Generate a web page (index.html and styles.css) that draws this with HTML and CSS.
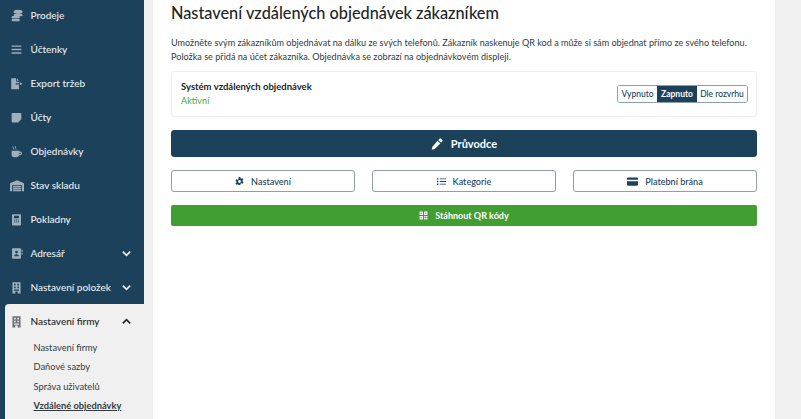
FILE: index.html
```html
<!DOCTYPE html>
<html lang="cs">
<head>
<meta charset="utf-8">
<title>Nastavení vzdálených objednávek zákazníkem</title>
<link rel="stylesheet" href="styles.css">
</head>
<body>
<div class="app">
  <nav class="sidebar">
    <a class="item"><svg class="ic" viewBox="0 0 16 16"><ellipse cx="10" cy="3.500" rx="5.500" ry="2.500"/><rect x="4.500" y="6" width="11" height="3" rx="1.500"/><rect x="2" y="8.500" width="10" height="3" rx="1.500"/><rect x="2" y="12" width="10" height="3" rx="1.500"/></svg><span>Prodeje</span></a>
    <a class="item"><svg class="ic" viewBox="0 0 16 16"><path d="M2 3h12v1.700H2zM2 7.200h12v1.700H2zM2 11.400h12v1.700H2z"/></svg><span>Účtenky</span></a>
    <a class="item"><svg class="ic" viewBox="0 0 16 16"><path d="M1.500 1.500h6v4.200H11v2H7v1.500h4v5.800H1.500zM8.500 1.500 11 4.700H8.500zM12 6.500 15.500 8.300 12 10z"/></svg><span>Export tržeb</span></a>
    <a class="item"><svg class="ic" viewBox="0 0 16 16"><path d="M3 2.500h10a1 1 0 0 1 1 1V10l-4 4H3a1 1 0 0 1-1-1V3.500a1 1 0 0 1 1-1z"/></svg><span>Účty</span></a>
    <a class="item"><svg class="ic" viewBox="0 0 16 16"><path d="M2 7h9.500v1h1a2.300 2.300 0 0 1 0 4.600h-1.300A3.300 3.300 0 0 1 8 15H5.300A3.300 3.300 0 0 1 2 11.700zM11.500 9.500v1.700h1a.85.85 0 0 0 0-1.700zM4 1.500l1 4H4l-1-4zM7 1.500l1 4H7l-1-4z"/></svg><span>Objednávky</span></a>
    <a class="item"><svg class="ic ic-wide" viewBox="0 0 16 14"><path d="M8 1 16 4.500V13.500h-2.500V6.500h-11v7H0V4.500zM3.500 7.300h9v1.600h-9zM3.500 9.600h9v1.600h-9zM3.500 11.900h9v1.600h-9z"/></svg><span class="label-wide">Stav skladu</span></a>
    <a class="item"><svg class="ic" viewBox="0 0 16 16"><path fill-rule="evenodd" d="M3.500 1.500h9a1 1 0 0 1 1 1v12a1 1 0 0 1-1 1h-9a1 1 0 0 1-1-1v-12a1 1 0 0 1 1-1zM5 3.500v3h6v-3zM5 8v1.300h1.400V8zM7.300 8v1.300h1.400V8zM9.600 8v1.300H11V8zM5 10.500v1.300h1.400v-1.300zM7.300 10.500v1.300h1.400v-1.300zM9.600 10.500v1.300H11v-1.300z"/></svg><span>Pokladny</span></a>
    <a class="item"><svg class="ic" viewBox="0 0 16 16"><path fill-rule="evenodd" d="M3.500 1.500h9a1 1 0 0 1 1 1v11a1 1 0 0 1-1 1h-9a1 1 0 0 1-1-1v-11a1 1 0 0 1 1-1zM8 4.500a1.700 1.700 0 1 0 0 3.400 1.700 1.700 0 0 0 0-3.400zM5 11.500h6c0-1.500-1.300-2.600-3-2.600s-3 1.100-3 2.600zM14.200 3.500H15.500V6h-1.300zM14.200 7H15.500v2.500h-1.300z"/></svg><span>Adresář</span><svg class="chev" viewBox="0 0 12 12"><path d="M2 4l4 4 4-4"/></svg></a>
    <a class="item"><svg class="ic" viewBox="0 0 16 16"><path fill-rule="evenodd" d="M3 1.500h10v14H9.500V13h-3v2.500H3zM5 3.500v2h2v-2zM9 3.500v2h2v-2zM5 7v2h2V7zM9 7v2h2V7zM5 10.500V12h6v-1.500z"/></svg><span>Nastavení položek</span><svg class="chev" viewBox="0 0 12 12"><path d="M2 4l4 4 4-4"/></svg></a>
    <div class="group">
      <a class="item item-open"><svg class="ic" viewBox="0 0 16 16"><path fill-rule="evenodd" d="M3 1.500h10v14H9.500V13h-3v2.500H3zM5 3.500v2h2v-2zM9 3.500v2h2v-2zM5 7v2h2V7zM9 7v2h2V7zM5 10.500V12h6v-1.500z"/></svg><span>Nastavení firmy</span><svg class="chev" viewBox="0 0 12 12"><path d="M2 8l4-4 4 4"/></svg></a>
      <a class="sub">Nastavení firmy</a>
      <a class="sub">Daňové sazby</a>
      <a class="sub">Správa uživatelů</a>
      <a class="sub sub-active">Vzdálené objednávky</a>
    </div>
  </nav>
  <main class="main">
    <h1 class="title">Nastavení vzdálených objednávek zákazníkem</h1>
    <p class="desc">Umožněte svým zákazníkům objednávat na dálku ze svých telefonů. Zákazník naskenuje QR kod a může si sám objednat přímo ze svého telefonu.<br>Položka se přidá na účet zákazníka. Objednávka se zobrazí na objednávkovém displeji.</p>
    <section class="card">
      <div>
        <div class="card-title">Systém vzdálených objednávek</div>
        <div class="card-status">Aktivní</div>
      </div>
      <div class="toggle">
        <button class="seg seg-a">Vypnuto</button>
        <button class="seg seg-z seg-on">Zapnuto</button>
        <button class="seg seg-b">Dle rozvrhu</button>
      </div>
    </section>
    <button class="btn-primary"><svg class="btn-ic-lg" viewBox="0 0 16 16"><path d="M11.300 1a1.500 1.500 0 0 1 2.100 0l1.600 1.600a1.500 1.500 0 0 1 0 2.100l-1.500 1.500-3.700-3.700zM8.800 3.500l3.700 3.700-7.500 7.500-4 .8.800-4z"/></svg>Průvodce</button>
    <div class="row">
      <button class="btn-outline"><svg class="btn-ic" viewBox="0 0 16 16"><path fill-rule="evenodd" d="M6.500 0h3l.5 2.300 1.300.7 2.300-.8 1.500 2.600-1.800 1.500v1.400l1.800 1.500-1.500 2.600-2.300-.8-1.300.7-.5 2.300h-3L6 13.700 4.700 13l-2.300.8L.9 11.200l1.800-1.500V8.300L.9 6.800 2.400 4.200l2.300.8L6 4.300z M8 5.500a2.500 2.500 0 1 0 0 5 2.500 2.500 0 0 0 0-5z"/></svg>Nastavení</button>
      <button class="btn-outline"><svg class="btn-ic" viewBox="0 0 16 16"><path d="M0 2h2.500v2.500H0zM5 2.600h11v1.400H5zM0 6.800h2.500v2.500H0zM5 7.300h11v1.400H5zM0 11.500h2.500V14H0zM5 12.100h11v1.400H5z"/></svg>Kategorie</button>
      <button class="btn-outline"><svg class="btn-ic btn-ic-card" viewBox="0 0 16 16"><path d="M1.500 2h13a1.500 1.500 0 0 1 1.500 1.500V5.500H0V3.500A1.500 1.500 0 0 1 1.500 2zM0 7.500h16v5A1.500 1.500 0 0 1 14.500 14h-13A1.500 1.500 0 0 1 0 12.500z"/></svg>Platební brána</button>
    </div>
    <button class="btn-green"><svg class="btn-ic" viewBox="0 0 16 16"><path fill-rule="evenodd" d="M1 1h6v6H1zM3 3v2h2V3zM9 1h6v6H9zM11 3v2h2V3zM1 9h6v6H1zM3 11v2h2v-2zM9 9h2.500v2.500H9zM12.500 9H15v2.500h-2.500zM9 12.500h2.500V15H9zM12.500 12.500H15V15h-2.500z"/></svg>Stáhnout QR kódy</button>
  </main>
</div>
</body>
</html>
```
FILE: styles.css
```css
* { box-sizing: border-box; }
html, body { margin: 0; height: 100%; overflow: hidden; }
body { background: #f0f0f0; font-family: "Lato", "Noto Sans", sans-serif; color: #212529; }
.app { display: flex; height: 419px; }
.sidebar { width: 144px; flex: none; background: #1b415b; margin-top: -2px; height: 421px; }
.item { display: flex; align-items: center; height: 34px; padding-left: 10px; color: #e9eef2; font-size: 10px; font-weight: 500; }
.item span { flex: 1; margin-left: 7.500px; white-space: nowrap; }
.ic { width: 13px; height: 13px; fill: #9fb0bc; flex: none; }
.ic-wide { width: 14px; margin-left: -0.500px; }
.item .label-wide { margin-left: 7px; }
.chev { width: 11px; height: 11px; margin-right: 12px; fill: none; stroke: #e9eef2; stroke-width: 1.800; flex: none; }
.group { margin: 1px -9px 0 5px; background: #f0f0f0; border-radius: 4px 0 0 0; padding-bottom: 8px; position: relative; }
.item-open { color: #212529; padding-left: 5px; margin-top: -1px; }
.item-open .ic { fill: #6b7176; }
.item-open .chev { stroke: #212529; margin-right: 21px; }
.sub { display: block; padding-left: 28.500px; font-size: 9.300px; line-height: 19.300px; color: #343a40; }
.sub-active { font-weight: 700; text-decoration: underline; }
.main { width: 622px; margin-left: 9px; flex: none; background: #fff; padding: 0 18px; }
.title { margin: 1px 0 0; font-size: 16.300px; line-height: 24px; font-weight: 500; color: #212529; }
.desc { margin: 11px 0 0; font-size: 9.100px; line-height: 13.500px; color: #343a40; white-space: nowrap; }
.card { display: flex; justify-content: space-between; align-items: center; height: 46px; margin-top: 8px; padding: 0 8px 0 9px; border: 1px solid #f0f0f0; border-radius: 3px; }
.card-title { font-size: 9.500px; font-weight: 700; line-height: 14px; color: #212529; }
.card-status { font-size: 9.100px; line-height: 14px; color: #4ea93b; }
.toggle { display: flex; height: 18px; border: 1px solid #8c9fae; border-radius: 3px; overflow: hidden; }
.seg { border: 0; background: #fff; padding: 0; font: 500 8.500px "Lato", sans-serif; color: #1b415b; }
.seg-a { width: 39px; }
.seg-z { width: 40px; }
.seg-b { width: 50px; }
.seg-on { background: #1b415b; color: #fff; font-weight: 700; }
.btn-primary { display: flex; width: 100%; height: 27px; margin-top: 13px; align-items: center; justify-content: center; background: #1b415b; border: 1px solid #1b415b; border-radius: 3px; color: #fff; font: 700 11px "Lato", sans-serif; }
.btn-ic-lg { width: 12px; height: 12px; fill: #fff; margin-right: 8px; }
.row { display: grid; grid-template-columns: repeat(3, 1fr); gap: 17px; margin-top: 13px; }
.btn-outline { display: flex; height: 22px; align-items: center; justify-content: center; background: #fff; border: 1px solid #8c9fae; border-radius: 3px; color: #1b415b; font: 500 9.100px "Lato", sans-serif; }
.btn-ic { width: 9px; height: 9px; fill: currentColor; margin-right: 7px; }
.btn-ic-card { width: 11px; height: 11px; }
.btn-green { display: flex; width: 100%; height: 21px; margin-top: 13px; align-items: center; justify-content: center; background: #419e30; border: 0; border-radius: 2px; color: #fff; font: 700 9px "Lato", sans-serif; }
```
